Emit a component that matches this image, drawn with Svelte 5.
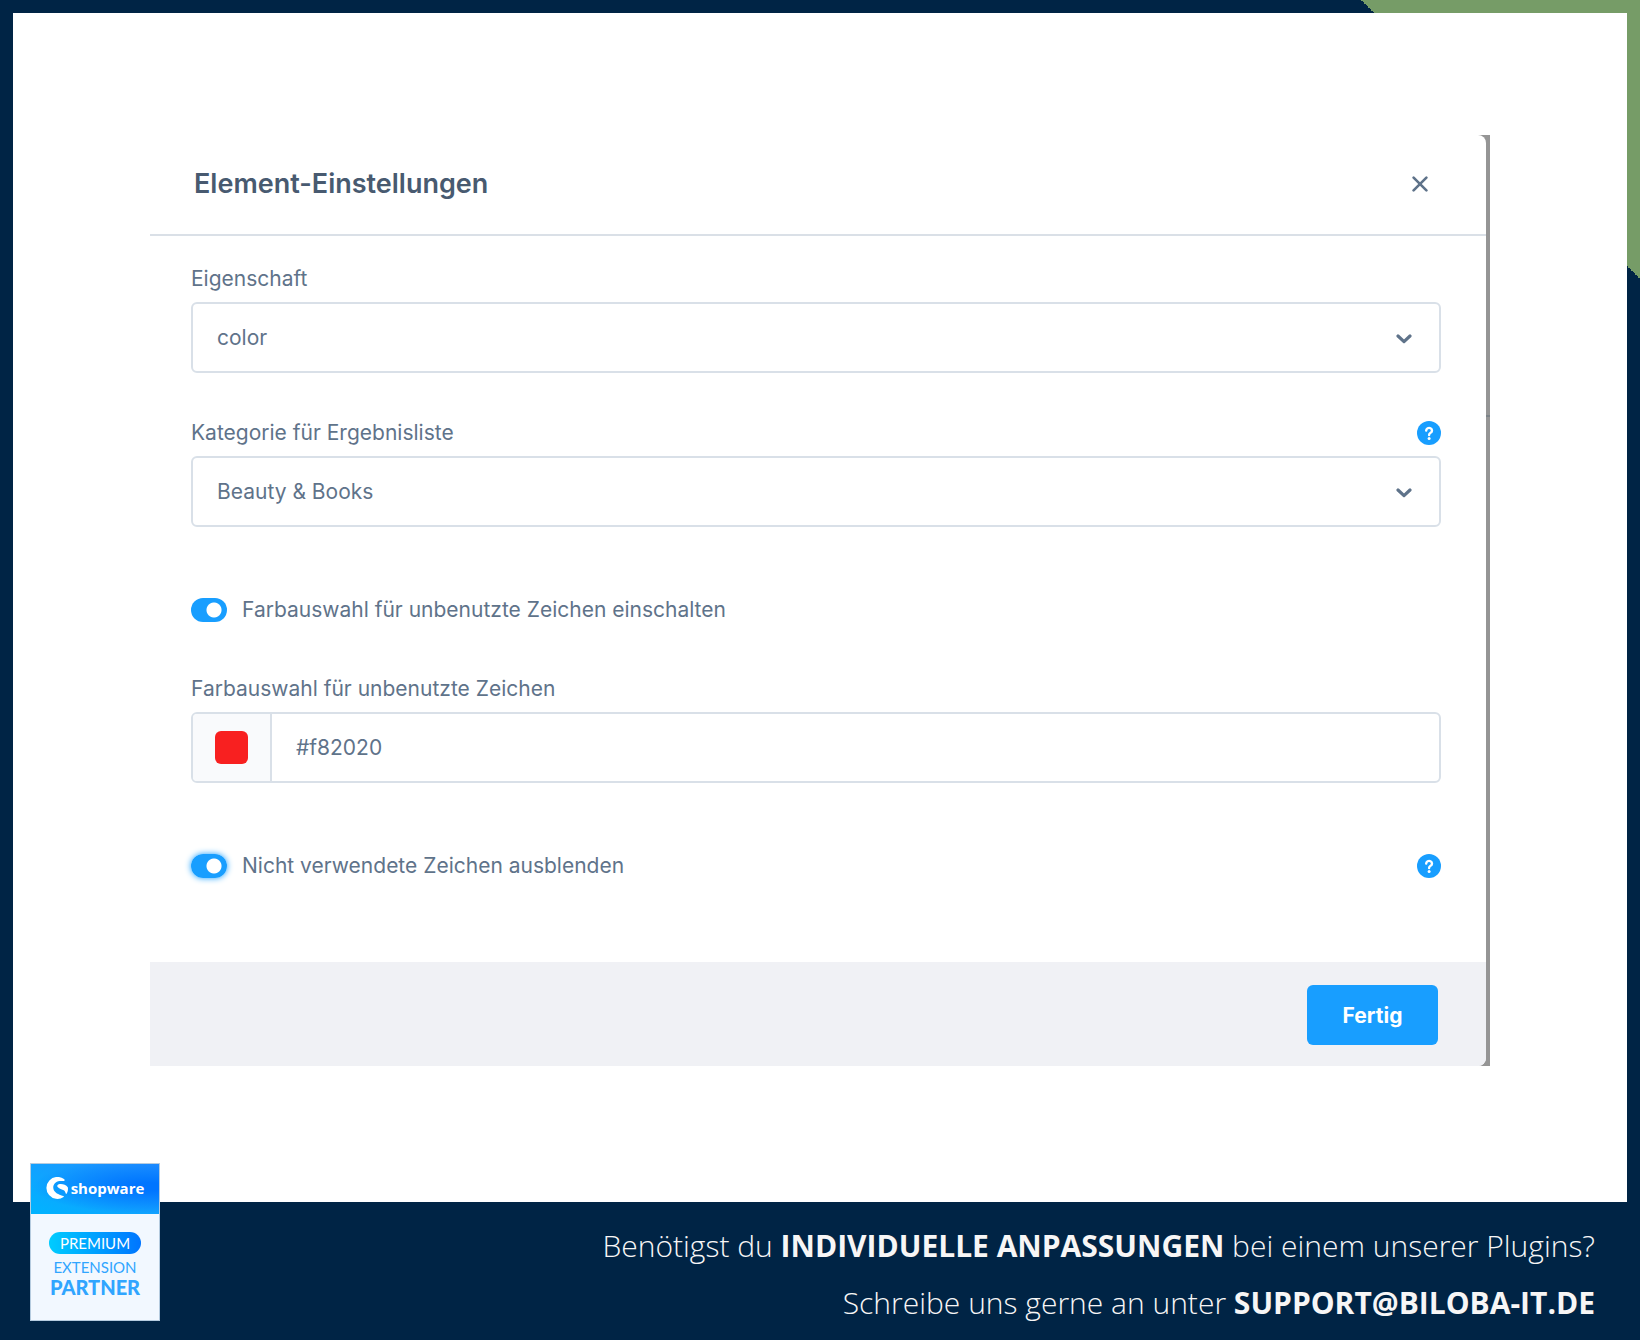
<script lang="ts">
  let property = $state('color')
  let category = $state('Beauty & Books')
  let colorEnabled = $state(true)
  let color = $state('#f82020')
  let hideUnused = $state(true)
</script>

{#snippet chevron()}
  <svg class="chevron" viewBox="0 0 16 10" aria-hidden="true">
    <path d="M2 2l6 5.6L14 2" />
  </svg>
{/snippet}

{#snippet help()}
  <button type="button" class="help" aria-label="Hilfe">
    <svg viewBox="0 0 24 24" aria-hidden="true">
      <circle cx="12" cy="12" r="12" fill="#189eff" />
      <path d="M9.200 9.500a2.900 2.600 0 1 1 4.400 2.200c-1 .6-1.500 1-1.500 2.300" />
      <circle cx="12.1" cy="17.600" r="1.500" fill="#fff" />
    </svg>
  </button>
{/snippet}

<div class="page">
  <main class="stage">
    <div class="backdrop">
      <section class="modal" aria-labelledby="modal-title">
        <header class="modal-header">
          <h1 id="modal-title">Element-Einstellungen</h1>
          <button type="button" class="close" aria-label="Schließen">
            <svg viewBox="0 0 16 16" aria-hidden="true">
              <path d="M1.6 1.6l12.8 12.8M14.4 1.6L1.6 14.4" />
            </svg>
          </button>
        </header>

        <div class="modal-body">
          <div class="field">
            <div class="field-head">
              <label for="property">Eigenschaft</label>
            </div>
            <div class="control">
              <select id="property" bind:value={property}>
                <option>color</option>
              </select>
              {@render chevron()}
            </div>
          </div>

          <div class="field">
            <div class="field-head">
              <label for="category">Kategorie für Ergebnisliste</label>
              {@render help()}
            </div>
            <div class="control">
              <select id="category" bind:value={category}>
                <option>Beauty &amp; Books</option>
              </select>
              {@render chevron()}
            </div>
          </div>

          <div class="switch-row">
            <label class="switch">
              <input type="checkbox" bind:checked={colorEnabled} />
              <span>Farbauswahl für unbenutzte Zeichen einschalten</span>
            </label>
          </div>

          <div class="field">
            <div class="field-head">
              <label for="color">Farbauswahl für unbenutzte Zeichen</label>
            </div>
            <div class="control color-control">
              <div class="prefix">
                <button
                  type="button"
                  class="swatch"
                  aria-label="Farbe wählen"
                  style="background-color: {color}"
                ></button>
              </div>
              <input id="color" type="text" bind:value={color} />
            </div>
          </div>

          <div class="switch-row">
            <label class="switch focused">
              <input type="checkbox" bind:checked={hideUnused} />
              <span>Nicht verwendete Zeichen ausblenden</span>
            </label>
            {@render help()}
          </div>
        </div>

        <footer class="modal-footer">
          <button type="button" class="btn-primary">Fertig</button>
        </footer>
      </section>
    </div>
  </main>

  <footer class="banner">
    <div class="badge">
      <div class="badge-top">
        <svg viewBox="0 0 22 22" aria-hidden="true">
          <path d="M18 2.1A11 11 0 1 0 17.6 20c.4-.3.3-.7-.2-.9-3-1.1-7.6-2.4-9.4-5.6C5.900 9.400 8.400 4.700 13.500 4c1.600-.2 3-.1 4.400 0 .9 0 1-1.200.1-1.900z" />
          <path d="M21.800 10.200c-1.700-2.400-5.200-3.400-8-3.100-2 .2-3 1.400-2.300 2.700.9 1.700 3.800 2.200 6.200 3.500 1.200.7 1.700 1.900 2.200 3.500.1.300.4.300.6 0 1.300-2 1.800-4.500 1.300-6.600z" />
        </svg>
        <span>shopware</span>
      </div>
      <div class="badge-body">
        <span class="pill">PREMIUM</span>
        <span class="extension">EXTENSION</span>
        <span class="partner">PARTNER</span>
      </div>
    </div>
    <div class="pitch">
      <p>Benötigst du <strong>INDIVIDUELLE ANPASSUNGEN</strong> bei einem unserer Plugins?</p>
      <p>Schreibe uns gerne an unter <a href="mailto:support@biloba-it.de">SUPPORT@BILOBA-IT.DE</a></p>
    </div>
  </footer>
</div>

<style>
  :global(body) {
    margin: 0;
  }

  .page {
    box-sizing: border-box;
    min-height: 100vh;
    display: flex;
    flex-direction: column;
    padding: 13px 13px 0;
    background: linear-gradient(to bottom left, #769c67 50%, #002445 50%) top right / 279px 279px no-repeat #002445;
    font-family: Inter, sans-serif;
  }

  .stage {
    flex: 1;
    padding: 122px 137px 136px;
    background: #fff;
  }

  /* sliver of the dimmed page behind the dialog */
  .backdrop {
    padding-right: 4px;
    background: linear-gradient(#959595 280px, #7c8388 280px, #7c8388 282px, #959595 282px);
  }

  .modal {
    overflow: hidden;
    border-radius: 0 8px 8px 0;
    background: #fff;
    color: #5f738a;
    font-size: 21px;
    line-height: 24px;
  }

  .modal-header {
    display: flex;
    align-items: center;
    justify-content: space-between;
    height: 97px;
    padding: 0 58px 2px 44px;
    border-bottom: 2px solid #dae0e7;
  }

  h1 {
    margin: 0;
    color: #485a70;
    font-size: 27px;
    font-weight: 600;
    line-height: 32px;
  }

  button {
    padding: 0;
    border: none;
    background: none;
    font-family: inherit;
    cursor: pointer;
  }

  .close,
  .close svg {
    display: block;
    width: 16px;
    height: 16px;
  }

  .close path {
    fill: none;
    stroke: #5f738a;
    stroke-width: 2.6;
    stroke-linecap: round;
  }

  .modal-body {
    padding: 31px 45px 84px 41px;
  }

  .field-head {
    display: flex;
    align-items: center;
    justify-content: space-between;
    margin-bottom: 11px;
  }

  .field + .field {
    margin-top: 48px;
  }

  .control {
    display: grid;
    align-items: center;
    box-sizing: border-box;
    height: 71px;
    overflow: hidden;
    border: 2px solid #d9e0e8;
    border-radius: 6px;
  }

  select,
  .control input {
    width: 100%;
    height: 100%;
    padding: 0 24px;
    border: none;
    outline: none;
    background: transparent;
    color: inherit;
    font-family: inherit;
    font-size: 21px;
  }

  select {
    grid-area: 1 / 1;
    appearance: none;
  }

  .chevron {
    grid-area: 1 / 1;
    justify-self: end;
    width: 16px;
    height: 10px;
    margin: 2px 27px 0 0;
    pointer-events: none;
  }

  .chevron path {
    fill: none;
    stroke: #5f738a;
    stroke-width: 3.2;
    stroke-linecap: round;
    stroke-linejoin: round;
  }

  .help,
  .help svg {
    display: block;
    width: 24px;
    height: 24px;
  }

  .help path {
    fill: none;
    stroke: #fff;
    stroke-width: 2.4;
    stroke-linecap: round;
  }

  .switch-row {
    display: flex;
    align-items: center;
    justify-content: space-between;
    margin-top: 71px;
  }

  .switch-row + .field {
    margin-top: 55px;
  }

  .switch {
    display: flex;
    align-items: center;
    gap: 15px;
  }

  .switch input {
    appearance: none;
    width: 36px;
    height: 24px;
    margin: 0;
    border-radius: 12px;
    background: radial-gradient(circle at 23px 12px, #fff 7px, #189eff 8px);
  }

  .switch input:not(:checked) {
    background: radial-gradient(circle at 13px 12px, #fff 7px, #c2ccd6 8px);
  }

  .focused input {
    box-shadow: 0 0 6px #189eff;
  }

  .color-control {
    grid-template-columns: 79px 1fr;
  }

  .prefix {
    display: grid;
    place-items: center;
    box-sizing: border-box;
    height: 100%;
    border-right: 2px solid #d9e0e8;
    background: #f9fafc;
  }

  .swatch {
    width: 33px;
    height: 33px;
    border-radius: 6px;
  }

  .modal-footer {
    display: flex;
    align-items: center;
    justify-content: flex-end;
    box-sizing: border-box;
    height: 104px;
    padding: 2px 48px 0 0;
    background: #f0f1f5;
  }

  .btn-primary {
    width: 131px;
    height: 60px;
    border-radius: 6px;
    background: #189eff;
    color: #fff;
    font-size: 21px;
    font-weight: 700;
  }

  .banner {
    position: relative;
    display: flex;
    justify-content: flex-end;
    box-sizing: border-box;
    min-height: 138px;
    padding: 15px 32px 9px 180px;
    color: #f7f6f6;
    font-family: "Open Sans", sans-serif;
    font-size: 30px;
    font-weight: 300;
    line-height: 57px;
    text-align: right;
  }

  .pitch p {
    margin: 0;
  }

  .pitch strong,
  .pitch a {
    color: inherit;
    font-weight: 700;
    text-decoration: none;
  }

  .badge {
    position: absolute;
    bottom: 19px;
    left: 17px;
    display: flex;
    flex-direction: column;
    box-sizing: border-box;
    width: 130px;
    height: 158px;
    border: 1px solid #b5cbdf;
    background: #f2f8ff;
    color: #30a5ff;
    font-family: Lato, sans-serif;
    text-align: center;
  }

  .badge-top {
    display: flex;
    align-items: center;
    justify-content: center;
    gap: 3px;
    box-sizing: border-box;
    height: 50px;
    padding-bottom: 2px;
    background: radial-gradient(ellipse at 92% 45%, #0075ff 10%, transparent 70%), linear-gradient(20deg, #00b4ff, #248fff);
    color: #fff;
    font-family: "Open Sans", sans-serif;
    font-size: 15px;
    font-weight: 700;
    line-height: 20px;
  }

  .badge-top svg {
    width: 22px;
    height: 22px;
    fill: #fff;
  }

  .badge-body {
    display: flex;
    flex-direction: column;
    align-items: center;
    padding-top: 18px;
  }

  .pill {
    width: 92px;
    border-radius: 11px;
    background: linear-gradient(90deg, #00ccff, #0075ff);
    color: #fff;
    font-size: 15px;
    font-weight: 400;
    line-height: 22px;
  }

  .extension {
    margin-top: 3px;
    font-size: 15px;
    font-weight: 400;
    line-height: 20px;
  }

  .partner {
    font-size: 20px;
    font-weight: 900;
    line-height: 20px;
  }
</style>
